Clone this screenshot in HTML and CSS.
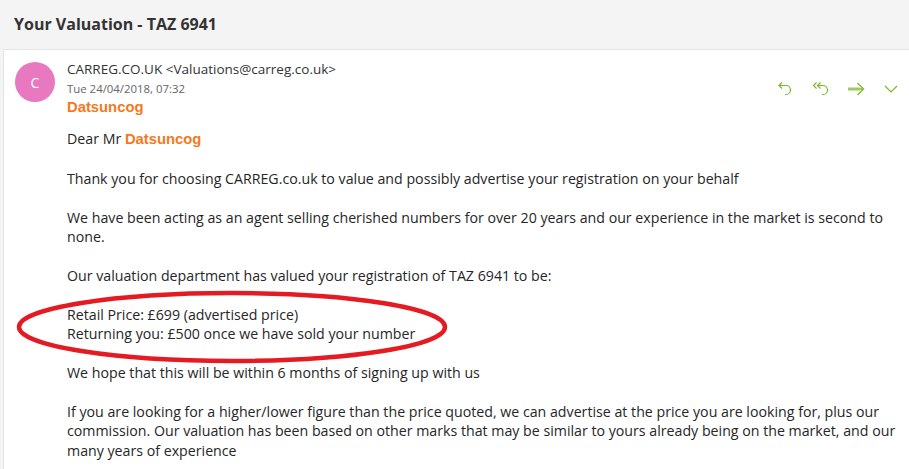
FILE: index.html
```html
<!DOCTYPE html>
<html>
<head>
<meta charset="utf-8">
<link rel="stylesheet" href="styles.css">
</head>
<body>
<header class="subject">Your Valuation - TAZ 6941</header>
<main class="card">
  <div class="head">
    <div class="avatar">C</div>
    <div class="meta">
      <div class="from">CARREG.CO.UK &lt;Valuations@carreg.co.uk&gt;</div>
      <div class="date">Tue 24/04/2018, 07:32</div>
      <div class="to">Datsuncog</div>
    </div>
    <div class="actions">
      <svg class="ic" width="16" height="16" viewBox="0 0 16 16"><path d="M5 1.5 L2 4.5 L5 7.5 M2 4.5 H9 A4.5 4.5 0 0 1 9 13.5 H8" fill="none" stroke="#7ab829" stroke-width="1.2"/></svg>
      <svg class="ic" width="17" height="16" viewBox="0 0 17 16"><path d="M4.5 1.5 L1.5 4.5 L4.5 7.5 M8.5 1.5 L5.5 4.5 L8.5 7.5 M5.5 4.5 H11 A4.5 4.5 0 0 1 11 13.5 H10" fill="none" stroke="#7ab829" stroke-width="1.2"/></svg>
      <svg class="ic" width="17" height="16" viewBox="0 0 17 16"><path d="M0 8 H15.5 M9.5 2 L15.5 8 L9.5 14" fill="none" stroke="#86bd3a" stroke-width="1.5"/><path d="M0 8 H12" stroke="#9ccb5c" stroke-width="3"/></svg>
      <svg class="ic" width="14" height="16" viewBox="0 0 14 16"><path d="M1 5 L7 11 L13 5" fill="none" stroke="#7ab829" stroke-width="1.2"/></svg>
    </div>
  </div>
  <div class="body">
    <p>Dear Mr <b class="name">Datsuncog</b></p>
    <p>Thank you for choosing CARREG.co.uk to value and possibly advertise your registration on your behalf</p>
    <p>We have been acting as an agent selling cherished numbers for over 20 years and our experience in the market is second to none.</p>
    <p>Our valuation department has valued your registration of TAZ 6941 to be:</p>
    <p class="prices">Retail Price: £699 (advertised price)<br>Returning you: £500 once we have sold your number
      <svg class="ring" width="432" height="76" viewBox="0 0 432 76"><ellipse cx="216" cy="38" rx="213" ry="34" fill="none" stroke="#e41b23" stroke-width="4.5"/></svg>
    </p>
    <p>We hope that this will be within 6 months of signing up with us</p>
    <p class="narrow">If you are looking for a higher/lower figure than the price quoted, we can advertise at the price you are looking for, plus our commission. Our valuation has been based on other marks that may be similar to yours already being on the market, and our many years of experience</p>
  </div>
</main>
</body>
</html>
```
FILE: styles.css
```css
html, body { margin: 0; padding: 0; }
body {
  background: #f4f4f4;
  font-family: "Open Sans", "Noto Sans", sans-serif;
  color: #262626;
  width: 909px;
  height: 469px;
  overflow: hidden;
}
.subject {
  height: 49px;
  box-sizing: border-box;
  padding: 13px 0 0 14px;
  font-size: 16px;
  line-height: 22px;
  font-weight: 700;
  color: #333;
}
.card {
  margin-left: 3px;
  background: #fff;
  border-left: 1px solid #e4e4e4;
  border-top: 1px solid #e4e4e4;
  height: 420px;
}
.head {
  display: flex;
  padding: 10px 0 0 11px;
}
.avatar {
  width: 40px;
  height: 40px;
  border-radius: 50%;
  background: #e878bf;
  color: #fff;
  font-size: 14px;
  display: flex;
  align-items: center;
  justify-content: center;
  margin-top: 2px;
  flex: none;
}
.meta { margin-left: 12px; flex: 1; }
.from { font-size: 13.5px; line-height: 19px; color: #333; }
.date { font-size: 11.4px; line-height: 19px; color: #666; }
.to {
  font-family: "Liberation Sans", Arial, sans-serif;
  font-weight: 700;
  font-size: 14.8px;
  line-height: 19px;
  color: #f47a20;
}
.actions {
  display: flex;
  gap: 19px;
  align-items: center;
  height: 16px;
  margin-top: 21px;
  padding-right: 11px;
}
.ic { display: block; }
.body {
  padding: 12px 0 0 63px;
  font-size: 14.2px;
  line-height: 19.5px;
}
.body p { margin: 0 0 19.3px 0; }
.name {
  font-family: "Liberation Sans", Arial, sans-serif;
  color: #f47a20;
  font-size: 14.8px;
}
.prices { position: relative; }
.ring { position: absolute; left: -51px; top: -16px; }
.narrow { padding-right: 8px; }
```
